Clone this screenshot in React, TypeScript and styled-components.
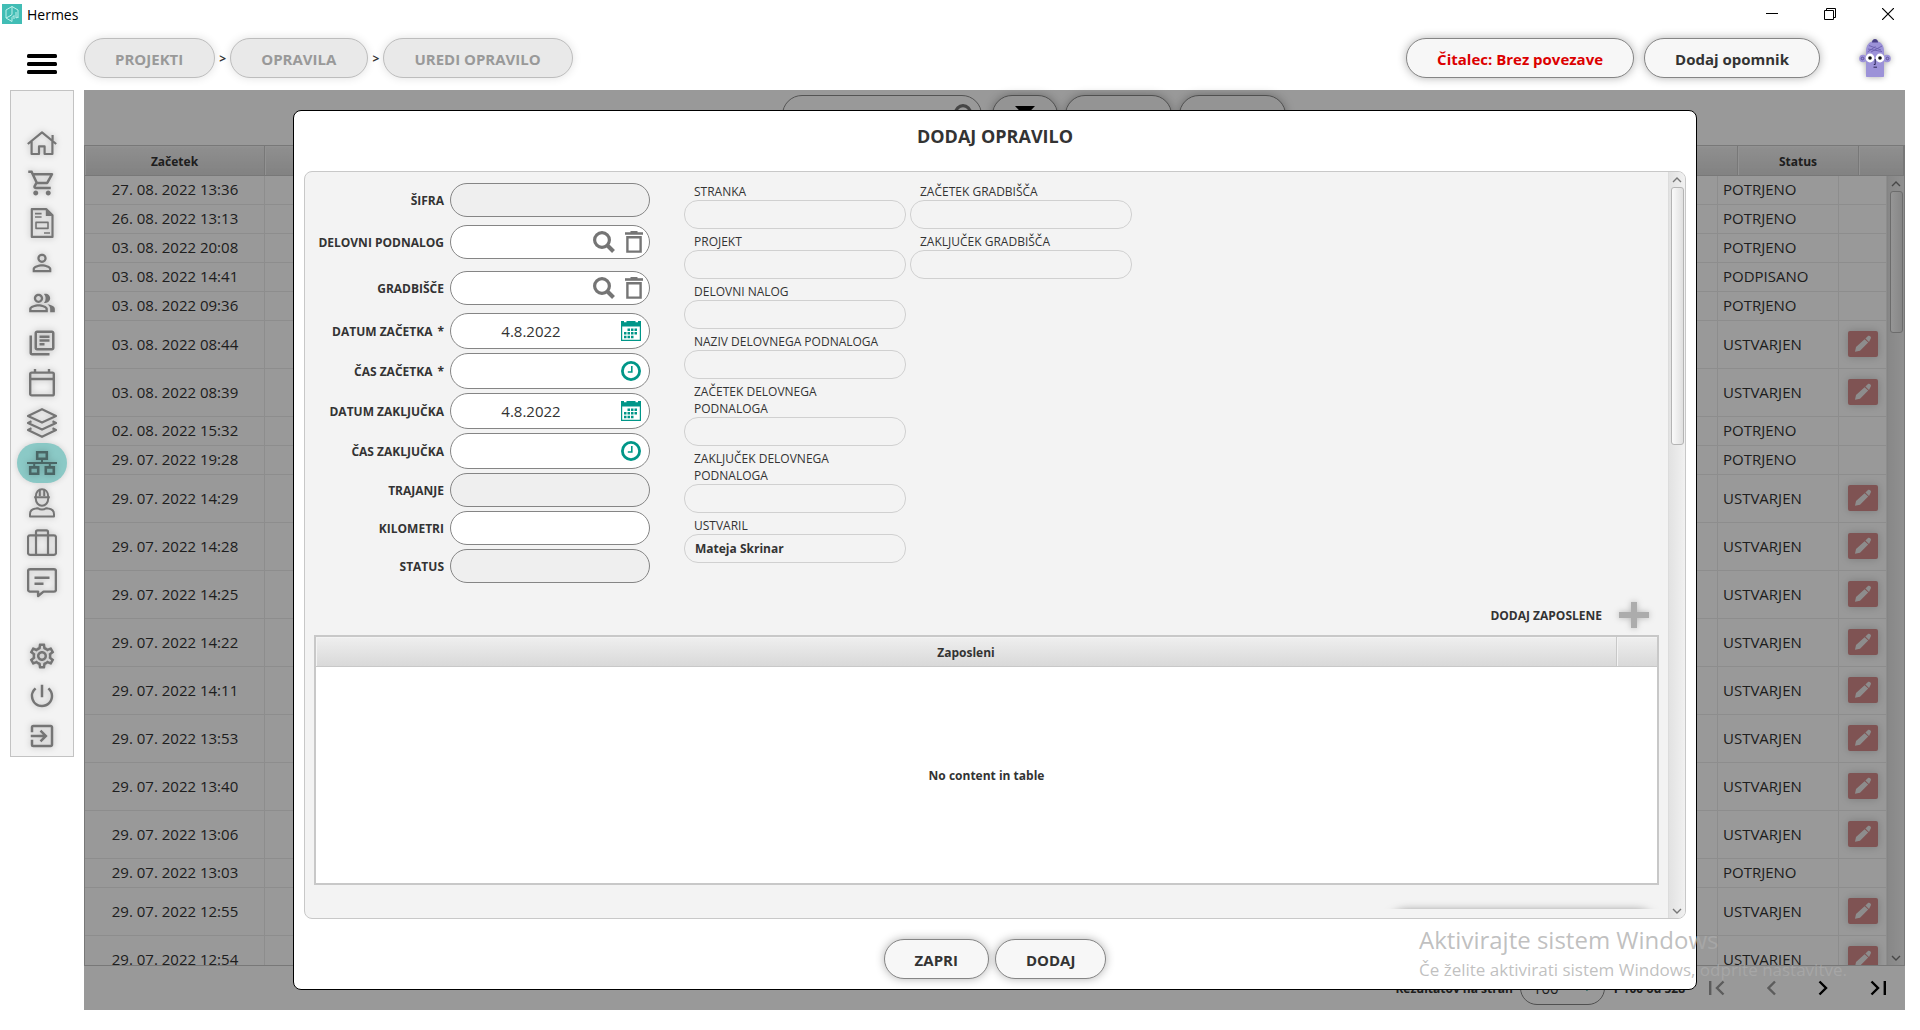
import React from "react";
import styled, { createGlobalStyle, css } from "styled-components";
import {
  MdOutlineShoppingCart,
  MdPersonOutline,
  MdOutlinePeopleAlt,
  MdOutlineLibraryBooks,
  MdOutlineSettings,
  MdPowerSettingsNew,
  MdExitToApp,
} from "react-icons/md";

const GlobalStyle = createGlobalStyle`
  *, *::before, *::after { box-sizing: border-box; }
  body {
    margin: 0;
    background: #fff;
    color: #333;
    font-family: "Open Sans", "Noto Sans", sans-serif;
    font-size: 15px;
  }
  button, input, select { font: inherit; color: inherit; }
  svg { display: block; flex: none; }
`;

const bareButton = css`
  display: flex;
  align-items: center;
  justify-content: center;
  padding: 0;
  border: 0;
  background: none;
  cursor: pointer;
`;

/* ---------- window frame ---------- */

const Page = styled.div`
  position: relative;
  display: flex;
  flex-direction: column;
  height: 100vh;
  overflow: hidden;
`;

const TitleBar = styled.header`
  display: flex;
  align-items: center;
  height: 28px;
  padding: 0 3px 0 2px;
  color: #000;
  font-size: 14px;
`;

const AppName = styled.span`
  flex: 1;
  padding-left: 5px;
`;

const WindowButton = styled.button`
  ${bareButton}
  width: 58px;
  height: 28px;
`;

const AppBar = styled.div`
  display: flex;
  align-items: flex-start;
  height: 62px;
  padding: 10px 15px 0 10px;
`;

const MenuButton = styled.button`
  ${bareButton}
  width: 64px;
  height: 52px;
  margin-right: 10px;
`;

const Pill = styled.button<{ $tone?: "muted" | "alert" }>`
  height: 40px;
  padding: 1px 30px 0;
  border: 1px solid #858585;
  border-radius: 20px;
  background: #f7f7f7;
  box-shadow: 0 0 10px rgba(0, 0, 0, 0.3);
  color: #333;
  font-weight: 700;
  white-space: nowrap;
  cursor: pointer;
  ${(p) => p.$tone === "alert" && css`color: #dc0000;`}
  ${(p) =>
    p.$tone === "muted" &&
    css`
      padding: 1px 31px 0 30px;
      border-color: #bdbdbd;
      background: #e9e9e9;
      box-shadow: 0 0 10px rgba(0, 0, 0, 0.12);
      color: #999;
    `}
`;

const Breadcrumbs = styled.nav`
  display: flex;
  align-items: center;
`;

const Separator = styled.span`
  width: 15px;
  text-align: center;
  font-size: 12px;
  font-weight: 700;
`;

const BarActions = styled.div`
  display: flex;
  align-items: center;
  gap: 10px;
  margin-left: auto;
`;

const AvatarButton = styled.button`
  ${bareButton}
  width: 32px;
  height: 40px;
  margin: 0 14px 0 29px;
  filter: drop-shadow(0 0 3px rgba(0, 0, 0, 0.35));
`;

const Body = styled.div`
  display: flex;
  flex: 1;
  gap: 10px;
  min-height: 0;
  padding: 0 15px 20px 10px;
`;

/* ---------- side navigation ---------- */

const SideNav = styled.nav`
  display: flex;
  flex-direction: column;
  align-items: center;
  align-self: flex-start;
  width: 64px;
  padding-top: 32px;
  border: 1px solid #c3c3c3;
  background: #f3f3f3;
`;

const NavGroup = styled.div`
  & + & {
    margin-top: 33px;
  }
`;

const NavButton = styled.button<{ $active?: boolean }>`
  ${bareButton}
  width: 50px;
  height: 40px;
  border-radius: 20px;
  color: ${(p) => (p.$active ? "#4a6665" : "#757575")};
  background: ${(p) => (p.$active ? "#8bc9c6" : "none")};
  box-shadow: ${(p) => (p.$active ? "0 0 6px rgba(0, 0, 0, 0.15)" : "none")};
  svg {
    filter: drop-shadow(0 0 3px rgba(0, 0, 0, 0.25));
  }
`;

/* ---------- task list ---------- */

const Main = styled.main`
  position: relative;
  display: flex;
  flex: 1;
  flex-direction: column;
  min-width: 0;
`;

const ListToolbar = styled.div`
  display: flex;
  justify-content: center;
  gap: 7px;
  height: 55px;
  padding: 5px 0 0 78px;
`;

const SearchBox = styled.label`
  display: flex;
  align-items: center;
  width: 200px;
  height: 40px;
  margin-right: 3px;
  padding: 0 5px 0 12px;
  border: 1px solid #8c8c8c;
  border-radius: 20px;
`;

const PlainInput = styled.input<{ $centered?: boolean }>`
  flex: 1;
  width: 0;
  min-width: 0;
  height: 100%;
  padding: 0 10px;
  border: 0;
  outline: 0;
  background: none;
  text-align: ${(p) => (p.$centered ? "center" : "left")};
`;

const ToolbarButton = styled(Pill)<{ $wide?: boolean }>`
  display: flex;
  align-items: center;
  justify-content: center;
  width: ${(p) => (p.$wide ? 107 : 66)}px;
  padding: 0;
  color: #000;
`;

const headerSurface = css`
  height: 30px;
  padding: 2px 0 0;
  border-right: 1px solid #c8c8c8;
  border-bottom: 1px solid #c8c8c8;
  background: linear-gradient(#efefef, #d9d9d9);
  box-shadow: inset 1px 1px 0 #f3f3f3;
  font-size: 12px;
  font-weight: 700;
`;

const ListFrame = styled.div`
  display: flex;
  flex: 1;
  flex-direction: column;
  min-height: 0;
  border: 1px solid #c8c8c8;
`;

const ListTable = styled.table`
  flex: 1;
  width: 100%;
  table-layout: fixed;
  border-collapse: separate;
  border-spacing: 0;
`;

const ListHeadCell = styled.th`
  ${headerSurface}
`;

const Col = styled.col<{ $w?: number }>`
  width: ${(p) => (p.$w ? `${p.$w}px` : "auto")};
`;

const ListScroll = styled.div`
  display: flex;
  flex: 1;
  align-items: flex-start;
  min-height: 0;
  overflow: hidden;
`;

const ListRow = styled.tr<{ $tall: boolean }>`
  height: ${(p) => (p.$tall ? 48 : 29)}px;
`;

const ListCell = styled.td<{ $align?: string }>`
  padding: 0 4px 2px 5px;
  border-right: 1px solid #ebebeb;
  border-bottom: 1px solid #ebebeb;
  line-height: 20px;
  text-align: ${(p) => p.$align ?? "left"};
`;

const EditButton = styled.button`
  ${bareButton}
  width: 30px;
  height: 26px;
  margin: 0 auto;
  border-radius: 2px;
  background: #d48a8a;
  box-shadow: 0 0 8px rgba(0, 0, 0, 0.2);
`;

const Pager = styled.div`
  display: flex;
  align-items: center;
  justify-content: flex-end;
  height: 44px;
  padding-right: 19px;
  font-size: 12px;
  font-weight: 700;
`;

const PageSize = styled.span`
  display: flex;
  align-items: center;
  width: 85px;
  height: 34px;
  margin: 0 7px;
  padding-right: 12px;
  border: 1px solid #858585;
  border-radius: 17px;
`;

const PageSizeSelect = styled.select`
  flex: 1;
  min-width: 0;
  height: 100%;
  padding: 0 0 0 12px;
  border: 0;
  background: none;
  appearance: none;
  font-size: 15px;
  font-weight: 400;
`;

const PagerNav = styled.div`
  display: flex;
  justify-content: space-between;
  width: 177px;
  margin-left: 24px;
`;

const PagerButton = styled.button`
  ${bareButton}
  color: #000;
  &:disabled {
    color: #9a9a9a;
  }
`;

/* ---------- scroll bar ---------- */

const ScrollTrack = styled.div`
  display: flex;
  flex: none;
  flex-direction: column;
  align-self: stretch;
  align-items: center;
  width: 17px;
  border-left: 1px solid #dcdcdc;
  background: linear-gradient(90deg, #e2e2e2, #f1f1f1);
  color: #777;
`;

const ScrollArrow = styled.button`
  ${bareButton}
  width: 16px;
  height: 15px;
`;

const ScrollThumb = styled.div<{ $length: number }>`
  width: 13px;
  height: ${(p) => p.$length}px;
  margin-bottom: auto;
  border: 1px solid #b4b4b4;
  border-radius: 3px;
  background: linear-gradient(90deg, #fafafa, #e0e0e0);
`;

/* ---------- dialog ---------- */

const Overlay = styled.div`
  position: absolute;
  inset: 0;
  display: flex;
  padding: 20px 208px 20px 209px;
  background: rgba(0, 0, 0, 0.4);
`;

const Dialog = styled.section`
  display: flex;
  flex: 1;
  flex-direction: column;
  min-width: 0;
  padding: 0 10px 10px;
  border: 1px solid #000;
  border-radius: 8px;
  background: #fff;
`;

const DialogTitle = styled.h1`
  margin: 0;
  padding: 13px 0 23px;
  font-size: 18px;
  line-height: 24px;
  text-align: center;
`;

const Panel = styled.div`
  display: flex;
  flex: 1;
  min-height: 0;
  overflow: hidden;
  border: 1px solid #c8c8c8;
  border-radius: 8px;
  background: #f3f3f3;
`;

const PanelContent = styled.div`
  flex: 1;
  min-width: 0;
  margin: 9px;
  padding-top: 2px;
  overflow: hidden;
`;

const FormArea = styled.form`
  display: flex;
  gap: 34px;
`;

const FieldList = styled.div`
  display: flex;
  flex-direction: column;
  gap: 4px;
`;

const FieldRow = styled.div<{ $roomy?: boolean }>`
  display: grid;
  grid-template-columns: 130px 200px;
  gap: 6px;
  align-items: center;
  height: ${(p) => (p.$roomy ? "42px" : "auto")};
`;

const FieldLabel = styled.label`
  font-size: 12px;
  font-weight: 700;
  text-align: right;
  white-space: nowrap;
`;

const RequiredMark = styled.span`
  padding-left: 5px;
`;

const FieldBox = styled.div<{ $readOnly?: boolean; $picker?: boolean }>`
  display: flex;
  align-items: center;
  gap: 10px;
  height: ${(p) => (p.$picker ? 36 : 34)}px;
  padding-right: ${(p) => (p.$picker ? 8 : 6)}px;
  border: 1px solid #858585;
  border-radius: 18px;
  background: ${(p) => (p.$readOnly ? "#efefef" : "#fff")};
`;

const FieldButton = styled.button<{ $accent?: boolean }>`
  ${bareButton}
  color: ${(p) => (p.$accent ? "#009688" : "#757575")};
`;

const InfoColumns = styled.div`
  display: flex;
  align-items: flex-start;
  gap: 4px;
`;

const InfoColumn = styled.div`
  display: flex;
  flex-direction: column;
  gap: 4px;
  width: 222px;
`;

const InfoLabel = styled.label`
  display: block;
  padding: 0 26px 0 10px;
  font-size: 12px;
  line-height: 17px;
`;

const InfoInput = styled.input`
  display: block;
  width: 100%;
  height: 29px;
  padding: 0 10px;
  border: 1px solid #d0d0d0;
  border-radius: 14px;
  outline: 0;
  background: none;
  font-size: 12px;
  font-weight: 700;
`;

const AddEmployees = styled.div`
  display: flex;
  align-items: center;
  justify-content: flex-end;
  gap: 17px;
  height: 30px;
  margin: 17px 0 5px;
  padding-right: 10px;
  font-size: 12px;
  font-weight: 700;
`;

const AddButton = styled.button`
  ${bareButton}
  filter: drop-shadow(0 0 3px rgba(0, 0, 0, 0.25));
`;

const EmployeeTable = styled.table`
  width: 100%;
  height: 250px;
  table-layout: fixed;
  border: 2px solid #c8c8c8;
  border-collapse: separate;
  border-spacing: 0;
  background: #fff;
`;

const EmployeeHead = styled.th`
  ${headerSurface}
  &:last-child {
    border-right: 0;
  }
`;

const EmptyCell = styled.td`
  padding: 0;
  font-size: 12px;
  font-weight: 700;
  text-align: center;
`;

const NextSection = styled.div`
  width: 270px;
  height: 40px;
  margin: 26px 2px 0 auto;
  border-radius: 20px;
  box-shadow: 0 0 10px rgba(0, 0, 0, 0.5);
`;

const DialogActions = styled.footer`
  display: flex;
  justify-content: center;
  gap: 6px;
  padding-top: 20px;
`;

const Watermark = styled.div`
  position: absolute;
  right: 67px;
  bottom: 48px;
  width: 434px;
  color: rgba(171, 171, 171, 0.75);
  font-size: 17px;
  line-height: 24px;
  white-space: nowrap;
  pointer-events: none;
`;

const WatermarkTitle = styled.div`
  font-size: 24px;
  line-height: 36px;
`;

/* ---------- icons ---------- */

const LineIcon = ({ children, w = 2 }: { children: React.ReactNode; w?: number }) => (
  <svg width="30" height="30" viewBox="0 0 30 30" fill="none" stroke="currentColor" strokeWidth={w} strokeLinejoin="round">
    {children}
  </svg>
);

const HomeIcon = () => (
  <LineIcon w={2.2}>
    <path d="M.8 16 15 4.4 29.2 16M4.6 13.5V26H12v-7.6h5.6V26h7.8V13.5M25.6 7v6" />
  </LineIcon>
);

const DocumentIcon = () => (
  <LineIcon w={2.2}>
    <path d="M4.8 1.1h14.4l6.3 6.3v21.5H4.8z" />
    <path d="M18.8 1.5v6.6h6.4z" fill="currentColor" stroke="none" />
    <path d="M8 5.6h6.6M8 9h6.6M17 25h6" strokeWidth="1.6" />
    <path d="M9 14.4h12v6H9z" strokeWidth="1.6" />
  </LineIcon>
);

const CalendarIcon = () => (
  <LineIcon w={2.4}>
    <rect x="3.2" y="4.6" width="23.6" height="22.8" rx="1.5" />
    <path d="M3 11h24M8 1v4M22 1v4" />
  </LineIcon>
);

const LayersIcon = () => (
  <LineIcon w={2.2}>
    <path d="M15 1.2 29 8 15 14.6 1 8z" />
    <path d="m4.5 13.2-3.5 1.8 14 6.6L29 15l-3.5-1.8M4.5 20.2 1 22l14 6.8L29 22l-3.5-1.8" />
  </LineIcon>
);

const StructureIcon = () => (
  <LineIcon w={2.6}>
    <path d="M10.2 4.3h9.6v6.4h-9.6zM3.2 19.4h8v6.4h-8zM18.8 19.4h8v6.4h-8z" strokeLinejoin="miter" />
    <path d="M15 10v5.4M0 15h30M7.2 15v4M22.8 15v4" strokeWidth="2" />
  </LineIcon>
);

const WorkerIcon = () => (
  <LineIcon w={2}>
    <path d="M8.8 8.6C8.8 3.8 11.6 1.2 15 1.2s6.2 2.6 6.2 7.4v2.2c0 3.8-2.8 7-6.2 7s-6.2-3.2-6.2-7z" />
    <path d="M7.2 9.2h15.6M12.8 2v6M17.2 2v6" />
    <path d="M3 28.6v-2.4c0-3.4 2.6-5.2 5.8-5.6l1.8-.4c2.6 1.6 6.2 1.6 8.8 0l1.8.4c3.2.4 5.8 2.2 5.8 5.6v2.4z" />
  </LineIcon>
);

const LuggageIcon = () => (
  <LineIcon w={2.2}>
    <rect x="1" y="7.4" width="28" height="19.4" rx="2" />
    <path d="M9 26.5V4c0-1 .6-1.600 1.6-1.600h8.800c1 0 1.600.6 1.600 1.600v22.500" />
  </LineIcon>
);

const CommentIcon = () => (
  <LineIcon w={2.4}>
    <path d="M3 1.2h24c1 0 1.900.8 1.900 1.900v18.600c0 1-.9 1.900-1.900 1.900H16.500l-5.400 4.400v-4.400H3c-1 0-1.900-.9-1.900-1.900V3.100C1.100 2 2 1.200 3 1.200zM7.500 9.800h15M7.500 15.800h9" />
  </LineIcon>
);

const SearchIcon = ({ size = 22 }: { size?: number }) => (
  <svg width={size} height={size} viewBox="0 0 22 22" fill="none" stroke="currentColor">
    <circle cx="9" cy="9" r="7.4" strokeWidth="3.2" />
    <path d="m14.5 14.5 6 6" strokeWidth="4" />
  </svg>
);

const TrashIcon = () => (
  <svg width="18" height="22" viewBox="0 0 18 22" fill="none" stroke="currentColor">
    <path d="M0 2.5h18" strokeWidth="2.6" />
    <path d="M5.5 1h7" strokeWidth="2" />
    <path d="M2.4 6.2h13.2v14.4H2.400z" strokeWidth="2.4" />
  </svg>
);

const DateIcon = () => (
  <svg width="20" height="20" viewBox="0 0 20 20" fill="currentColor">
    <path d="M0 0h20v20H0zM1.200 5.500v13.300h17.600V5.500z" fillRule="evenodd" />
    <path d="M3 0h2.500v1.300H3zM14.500 0H17v1.300h-2.500z" fill="#fff" />
    <path d="M6.500 7.500H9V10H6.500zM10 7.500h2.500V10H10zM13.500 7.500H16V10h-2.500zM3 11h2.500v2.500H3zM6.500 11H9v2.500H6.500zM10 11h2.500v2.500H10zM13.500 11H16v2.500h-2.500zM3 14.800h2.500v2.500H3zM6.500 14.800H9v2.500H6.500zM10 14.800h2.500v2.500H10z" />
  </svg>
);

const TimeIcon = () => (
  <svg width="20" height="20" viewBox="0 0 20 20" fill="none" stroke="currentColor">
    <circle cx="10" cy="10" r="8.6" strokeWidth="2.8" />
    <path d="M10.8 5v6H6.8" strokeWidth="1.6" />
  </svg>
);

const PencilIcon = () => (
  <svg width="18" height="18" viewBox="0 0 18 18" fill="#ececec">
    <path d="M1 16.8 2 12 10.6 4.2l3.6 3.4L6 15.8zM11.4 3.5 13.700 1.300c.8-.8 2-.6 2.700.1s.8 1.700.1 2.500L15 6.900z" />
  </svg>
);

const ArrowIcon = ({ down }: { down?: boolean }) => (
  <svg width="10" height="6" viewBox="0 0 10 6" fill="none" stroke="currentColor" strokeWidth="1.4">
    <path d={down ? "m1 1 4 4 4-4" : "m1 5 4-4 4 4"} />
  </svg>
);

const PageIcon = ({ kind }: { kind: "first" | "prev" | "next" | "last" }) => {
  const wide = kind === "first" || kind === "last";
  const shape = {
    first: "M1.2 1v14M14.5 1.5 8 8l6.5 6.5",
    prev: "M8 1.5 1.5 8 8 14.5",
    next: "M1.5 1.5 8 8l-6.5 6.5",
    last: "M1.5 1.5 8 8l-6.5 6.5M14.8 1v14",
  }[kind];
  return (
    <svg width={wide ? 16 : 10} height="16" viewBox={`0 0 ${wide ? 16 : 10} 16`} fill="none" stroke="currentColor" strokeWidth="2.4">
      <path d={shape} />
    </svg>
  );
};

const Avatar = () => (
  <svg width="32" height="38" viewBox="0 0 32 38">
    <circle cx="4" cy="19.5" r="3.8" fill="#9c92d8" />
    <circle cx="28" cy="19.5" r="3.8" fill="#9c92d8" />
    <path d="M7 37V12c0-6 3.5-10 9-10s9 4 9 10v25c0 .6-.4 1-1 1H8c-.6 0-1-.4-1-1z" fill="#9c92d8" />
    <path d="M13 3.5C13 1.2 14.2 0 16 0s3 1.2 3 3.500z" fill="#4b4187" />
    <path d="M10 6.5 22 11M9 10l14 2.5M8.5 13l8-5.500M12 13l11-6" fill="none" stroke="#6a5fae" strokeWidth=".9" />
    <circle cx="3.5" cy="19.5" r="1.3" fill="none" stroke="#4b4187" strokeWidth=".7" />
    <circle cx="28.5" cy="19.5" r="1.3" fill="none" stroke="#4b4187" strokeWidth=".7" />
    <circle cx="11" cy="19" r="4.4" fill="#fff" />
    <circle cx="21" cy="19" r="4.4" fill="#fff" />
    <circle cx="11" cy="19" r="1.8" fill="#111" />
    <circle cx="21" cy="19" r="1.8" fill="#111" />
    <path d="M16.2 20v5.500h-1.400M14.500 28.200h3.500" fill="none" stroke="#2c2658" strokeWidth="1" />
  </svg>
);

const Logo = () => (
  <svg width="20" height="20" viewBox="0 0 20 20" fill="none" stroke="#bff0ea" strokeWidth="1">
    <path d="M0 0h20v20H0z" fill="#41bdb5" stroke="none" />
    <path d="M10 2.500v8l-3 2M10 2.500 4 6v8l6 3.500v-4l2-2V15M10 2.500 16 6v8M14 8v6l2-1M4 14l3-1.500" />
  </svg>
);

/* ---------- data ---------- */

const primaryNav = [
  { name: "Domov", icon: <HomeIcon /> },
  { name: "Nabava", icon: <MdOutlineShoppingCart size={30} /> },
  { name: "Dokumenti", icon: <DocumentIcon /> },
  { name: "Oseba", icon: <MdPersonOutline size={28} /> },
  { name: "Osebe", icon: <MdOutlinePeopleAlt size={28} /> },
  { name: "Knjižnica", icon: <MdOutlineLibraryBooks size={30} /> },
  { name: "Koledar", icon: <CalendarIcon /> },
  { name: "Sloji", icon: <LayersIcon /> },
  { name: "Projekti", icon: <StructureIcon />, active: true },
  { name: "Delavci", icon: <WorkerIcon /> },
  { name: "Potovanja", icon: <LuggageIcon /> },
  { name: "Sporočila", icon: <CommentIcon /> },
];

const systemNav = [
  { name: "Nastavitve", icon: <MdOutlineSettings size={30} /> },
  { name: "Izklop", icon: <MdPowerSettingsNew size={30} /> },
  { name: "Odjava", icon: <MdExitToApp size={30} /> },
];

const CONFIRMED = "POTRJENO";
const CREATED = "USTVARJEN";

const tasks: [string, string][] = [
  ["27. 08. 2022 13:36", CONFIRMED],
  ["26. 08. 2022 13:13", CONFIRMED],
  ["03. 08. 2022 20:08", CONFIRMED],
  ["03. 08. 2022 14:41", "PODPISANO"],
  ["03. 08. 2022 09:36", CONFIRMED],
  ["03. 08. 2022 08:44", CREATED],
  ["03. 08. 2022 08:39", CREATED],
  ["02. 08. 2022 15:32", CONFIRMED],
  ["29. 07. 2022 19:28", CONFIRMED],
  ["29. 07. 2022 14:29", CREATED],
  ["29. 07. 2022 14:28", CREATED],
  ["29. 07. 2022 14:25", CREATED],
  ["29. 07. 2022 14:22", CREATED],
  ["29. 07. 2022 14:11", CREATED],
  ["29. 07. 2022 13:53", CREATED],
  ["29. 07. 2022 13:40", CREATED],
  ["29. 07. 2022 13:06", CREATED],
  ["29. 07. 2022 13:03", CONFIRMED],
  ["29. 07. 2022 12:55", CREATED],
  ["29. 07. 2022 12:54", CREATED],
];

type Kind = "readonly" | "lookup" | "date" | "time" | "text";

const fields: { id: string; label: string; kind: Kind; value?: string; required?: boolean }[] = [
  { id: "sifra", label: "ŠIFRA", kind: "readonly" },
  { id: "podnalog", label: "DELOVNI PODNALOG", kind: "lookup" },
  { id: "gradbisce", label: "GRADBIŠČE", kind: "lookup" },
  { id: "datum-zacetka", label: "DATUM ZAČETKA", kind: "date", value: "4.8.2022", required: true },
  { id: "cas-zacetka", label: "ČAS ZAČETKA", kind: "time", required: true },
  { id: "datum-zakljucka", label: "DATUM ZAKLJUČKA", kind: "date", value: "4.8.2022" },
  { id: "cas-zakljucka", label: "ČAS ZAKLJUČKA", kind: "time" },
  { id: "trajanje", label: "TRAJANJE", kind: "readonly" },
  { id: "kilometri", label: "KILOMETRI", kind: "text" },
  { id: "status", label: "STATUS", kind: "readonly" },
];

const infoColumns: { label: string; value?: string }[][] = [
  [
    { label: "STRANKA" },
    { label: "PROJEKT" },
    { label: "DELOVNI NALOG" },
    { label: "NAZIV DELOVNEGA PODNALOGA" },
    { label: "ZAČETEK DELOVNEGA PODNALOGA" },
    { label: "ZAKLJUČEK DELOVNEGA PODNALOGA" },
    { label: "USTVARIL", value: "Mateja Skrinar" },
  ],
  [{ label: "ZAČETEK GRADBIŠČA" }, { label: "ZAKLJUČEK GRADBIŠČA" }],
];

/* ---------- parts ---------- */

const ScrollBar = ({ length }: { length: number }) => (
  <ScrollTrack>
    <ScrollArrow type="button" aria-label="Pomik gor">
      <ArrowIcon />
    </ScrollArrow>
    <ScrollThumb $length={length} />
    <ScrollArrow type="button" aria-label="Pomik dol">
      <ArrowIcon down />
    </ScrollArrow>
  </ScrollTrack>
);

const Field = ({ id, label, kind, value, required }: (typeof fields)[number]) => {
  const picker = kind === "date" || kind === "time";
  return (
    <FieldRow $roomy={kind === "lookup"}>
      <FieldLabel htmlFor={id}>
        {label}
        {required && <RequiredMark>*</RequiredMark>}
      </FieldLabel>
      <FieldBox $readOnly={kind === "readonly"} $picker={picker}>
        <PlainInput id={id} defaultValue={value} readOnly={kind === "readonly"} $centered={picker} />
        {kind === "lookup" && (
          <>
            <FieldButton type="button" aria-label={`Išči ${label}`}>
              <SearchIcon />
            </FieldButton>
            <FieldButton type="button" aria-label={`Počisti ${label}`}>
              <TrashIcon />
            </FieldButton>
          </>
        )}
        {picker && (
          <FieldButton type="button" $accent aria-label={`Izberi ${label}`}>
            {kind === "date" ? <DateIcon /> : <TimeIcon />}
          </FieldButton>
        )}
      </FieldBox>
    </FieldRow>
  );
};

const TaskList = () => (
  <>
    <ListToolbar>
      <SearchBox>
        <PlainInput aria-label="Iskanje" />
        <FieldButton type="button" aria-label="Išči">
          <SearchIcon />
        </FieldButton>
      </SearchBox>
      <ToolbarButton type="button" aria-label="Filter">
        <svg width="20" height="18" viewBox="0 0 20 18" fill="currentColor">
          <path d="M0 0h20l-7.500 8v8l-5 2V8z" />
        </svg>
      </ToolbarButton>
      <ToolbarButton type="button" $wide aria-label="Uredi" />
      <ToolbarButton type="button" $wide aria-label="Dodaj" />
    </ListToolbar>
    <ListFrame>
      <div>
        <ListTable>
          <colgroup>
            <Col $w={180} />
            <Col />
            <Col $w={121} />
            <Col $w={45} />
          </colgroup>
          <thead>
            <tr>
              <ListHeadCell>Začetek</ListHeadCell>
              <ListHeadCell />
              <ListHeadCell>Status</ListHeadCell>
              <ListHeadCell />
            </tr>
          </thead>
        </ListTable>
      </div>
      <ListScroll>
        <ListTable>
          <colgroup>
            <Col $w={180} />
            <Col />
            <Col $w={121} />
            <Col $w={48} />
          </colgroup>
          <tbody>
            {tasks.map(([start, status]) => (
              <ListRow key={start} $tall={status === CREATED}>
                <ListCell $align="center">{start}</ListCell>
                <ListCell />
                <ListCell>{status}</ListCell>
                <ListCell>
                  {status === CREATED && (
                    <EditButton type="button" aria-label="Uredi opravilo">
                      <PencilIcon />
                    </EditButton>
                  )}
                </ListCell>
              </ListRow>
            ))}
          </tbody>
        </ListTable>
        <ScrollBar length={142} />
      </ListScroll>
    </ListFrame>
    <Pager>
      <label htmlFor="page-size">Rezultatov na stran</label>
      <PageSize>
        <PageSizeSelect id="page-size" defaultValue="100">
          <option>100</option>
        </PageSizeSelect>
        <FieldButton as="span" $accent>
          <ArrowIcon down />
        </FieldButton>
      </PageSize>
      <span>1-100 od 528</span>
      <PagerNav>
        <PagerButton type="button" disabled aria-label="Prva stran"><PageIcon kind="first" /></PagerButton>
        <PagerButton type="button" disabled aria-label="Prejšnja stran"><PageIcon kind="prev" /></PagerButton>
        <PagerButton type="button" aria-label="Naslednja stran"><PageIcon kind="next" /></PagerButton>
        <PagerButton type="button" aria-label="Zadnja stran"><PageIcon kind="last" /></PagerButton>
      </PagerNav>
    </Pager>
  </>
);

const TaskDialog = () => (
  <Dialog role="dialog" aria-labelledby="dialog-title">
    <DialogTitle id="dialog-title">DODAJ OPRAVILO</DialogTitle>
    <Panel>
      <PanelContent>
        <FormArea>
          <FieldList>
            {fields.map((f) => (
              <Field key={f.id} {...f} />
            ))}
          </FieldList>
          <InfoColumns>
            {infoColumns.map((items, c) => (
              <InfoColumn key={c}>
                {items.map(({ label, value }, i) => (
                  <div key={label}>
                    <InfoLabel htmlFor={`info-${c}-${i}`}>{label}</InfoLabel>
                    <InfoInput id={`info-${c}-${i}`} readOnly defaultValue={value} />
                  </div>
                ))}
              </InfoColumn>
            ))}
          </InfoColumns>
        </FormArea>
        <AddEmployees>
          <span id="add-employees">DODAJ ZAPOSLENE</span>
          <AddButton type="button" aria-labelledby="add-employees">
            <svg width="30" height="26" viewBox="0 0 30 26" fill="none" stroke="#acacac" strokeWidth="6">
              <path d="M15 0v26M0 13h30" />
            </svg>
          </AddButton>
        </AddEmployees>
        <EmployeeTable>
          <colgroup>
            <Col />
            <Col $w={40} />
          </colgroup>
          <thead>
            <tr>
              <EmployeeHead>Zaposleni</EmployeeHead>
              <EmployeeHead />
            </tr>
          </thead>
          <tbody>
            <tr>
              <EmptyCell colSpan={2}>No content in table</EmptyCell>
            </tr>
          </tbody>
        </EmployeeTable>
        <NextSection />
      </PanelContent>
      <ScrollBar length={258} />
    </Panel>
    <DialogActions>
      <Pill type="button">ZAPRI</Pill>
      <Pill type="button">DODAJ</Pill>
    </DialogActions>
  </Dialog>
);

export default function App() {
  return (
    <Page>
      <GlobalStyle />
      <TitleBar>
        <Logo />
        <AppName>Hermes</AppName>
        <WindowButton type="button" aria-label="Pomanjšaj">
          <svg width="12" height="12" viewBox="0 0 12 12" stroke="#000"><path d="M0 5.500h12" /></svg>
        </WindowButton>
        <WindowButton type="button" aria-label="Obnovi">
          <svg width="12" height="12" viewBox="0 0 12 12" fill="none" stroke="#000"><path d="M.5 2.500h9v9h-9zM2.500 2.500v-2h9v9h-2" /></svg>
        </WindowButton>
        <WindowButton type="button" aria-label="Zapri okno">
          <svg width="12" height="12" viewBox="0 0 12 12" stroke="#000" strokeWidth="1.2"><path d="m0 0 12 12M12 0 0 12" /></svg>
        </WindowButton>
      </TitleBar>
      <AppBar>
        <MenuButton type="button" aria-label="Meni">
          <svg width="30" height="20" viewBox="0 0 30 20" fill="#000">
            <rect width="30" height="4" rx="1.5" />
            <rect y="8" width="30" height="4" rx="1.5" />
            <rect y="16" width="30" height="4" rx="1.5" />
          </svg>
        </MenuButton>
        <Breadcrumbs>
          <Pill type="button" $tone="muted">PROJEKTI</Pill>
          <Separator>&gt;</Separator>
          <Pill type="button" $tone="muted">OPRAVILA</Pill>
          <Separator>&gt;</Separator>
          <Pill type="button" $tone="muted">UREDI OPRAVILO</Pill>
        </Breadcrumbs>
        <BarActions>
          <Pill type="button" $tone="alert">Čitalec: Brez povezave</Pill>
          <Pill type="button">Dodaj opomnik</Pill>
          <AvatarButton type="button" aria-label="Uporabnik">
            <Avatar />
          </AvatarButton>
        </BarActions>
      </AppBar>
      <Body>
        <SideNav>
          {[primaryNav, systemNav].map((group, g) => (
            <NavGroup key={g}>
              {group.map((item) => (
                <NavButton key={item.name} type="button" aria-label={item.name} $active={"active" in item}>
                  {item.icon}
                </NavButton>
              ))}
            </NavGroup>
          ))}
        </SideNav>
        <Main>
          <TaskList />
          <Overlay>
            <TaskDialog />
          </Overlay>
        </Main>
      </Body>
      <Watermark>
        <WatermarkTitle>Aktivirajte sistem Windows</WatermarkTitle>
        Če želite aktivirati sistem Windows, odprite nastavitve.
      </Watermark>
    </Page>
  );
}
